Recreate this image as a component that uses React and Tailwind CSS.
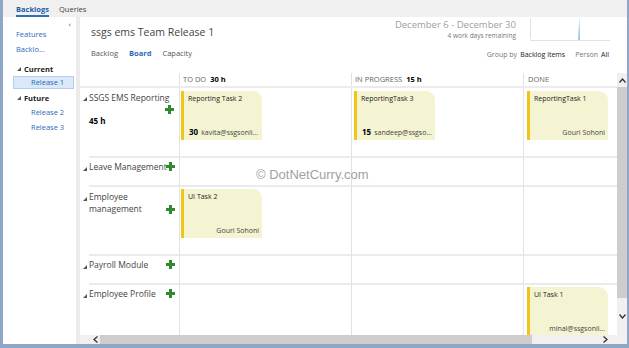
import React from "react";

const Plus = () => (
  <svg width="9" height="9" viewBox="0 0 9 9" className="shrink-0">
    <rect x="3" y="0" width="3" height="9" fill="#2f8a2f" />
    <rect x="0" y="3" width="9" height="3" fill="#2f8a2f" />
  </svg>
);

const Tri = () => (
  <svg width="4" height="4" viewBox="0 0 4 4" className="shrink-0">
    <polygon points="4,0 4,4 0,4" fill="#555" />
  </svg>
);

const Card = ({ title, hours, who, right }) => (
  <div className="w-[81px] h-[49px] bg-[#f5f4d2] border-l-[3px] border-[#f0c419] rounded-tr-[9px] flex flex-col justify-between pl-[4px] pr-[3px] pt-[3px] pb-[3px] text-[7px] leading-[9px] text-[#222]">
    <div>{title}</div>
    {right ? (
      <div className="text-right text-[#444]">{who}</div>
    ) : (
      <div className="flex items-baseline gap-[3px] pl-[1px]">
        <span className="font-bold text-[8px] text-black">{hours}</span>
        <span className="text-[#444] truncate">{who}</span>
      </div>
    )}
  </div>
);

const Empty = () => (
  <>
    <div className="w-[172px] shrink-0 border-l border-t-[2px] border-[#e2e2e2] border-t-[#ebebeb]" />
    <div className="w-[172px] shrink-0 border-l border-t-[2px] border-[#e2e2e2] border-t-[#ebebeb]" />
  </>
);

export default function App() {
  return (
    <div
      className="w-[629px] h-[348px] overflow-hidden bg-white flex flex-col border-l-[3px] border-r-[2px] border-b-[4px] border-[#8ea7c7] relative"
      style={{ fontFamily: '"Open Sans", "Noto Sans", sans-serif' }}
    >
      {/* top bar */}
      <div className="h-[17px] bg-[#f0f0f0] flex items-end pl-[13px] gap-[10px] text-[7.5px] shrink-0">
        <div className="font-bold text-[#1d5fa5] border-b-[2px] border-[#2b6fc0] pb-[1px] leading-[10px]">Backlogs</div>
        <div className="text-[#444] pb-[3px] leading-[10px]">Queries</div>
      </div>

      <div className="flex flex-1 min-h-0">
        {/* left panel */}
        <div className="w-[73px] relative text-[7.5px] leading-[10px] shrink-0">
          <div className="absolute right-[5px] top-[2px] text-[8px] text-[#555]">‹</div>
          <div className="pl-[13px] pt-[12px] text-[#2a6cb8]">Features</div>
          <div className="pl-[13px] pt-[5px] text-[#2a6cb8]">Backlo...</div>
          <div className="pl-[14px] pt-[10px] flex items-center gap-[3px] font-bold text-[#222]">
            <Tri />
            <span>Current</span>
          </div>
          <div className="ml-[10px] mr-[2px] mt-[2px] h-[13px] bg-[#dbe8f7] border border-[#b4cff0] pl-[17px] text-[#2a6cb8] leading-[11px]">Release 1</div>
          <div className="pl-[14px] pt-[4px] flex items-center gap-[3px] font-bold text-[#222]">
            <Tri />
            <span>Future</span>
          </div>
          <div className="pl-[28px] pt-[4px] text-[#2a6cb8]">Release 2</div>
          <div className="pl-[28px] pt-[5px] text-[#2a6cb8]">Release 3</div>
        </div>
        <div className="w-[4px] bg-[#ebebeb] shrink-0" />

        {/* main */}
        <div className="flex-1 flex flex-col min-w-0">
          {/* header */}
          <div className="h-[56px] flex shrink-0">
            <div className="pl-[11px] pt-[8px] flex-1">
              <div className="text-[10.5px] leading-[14px] text-[#444]">ssgs ems Team Release 1</div>
              <div className="flex gap-[11px] pt-[9px] text-[7.5px] leading-[10px]">
                <span className="text-[#555]">Backlog</span>
                <span className="font-bold text-[#2a6cb8]">Board</span>
                <span className="text-[#555]">Capacity</span>
              </div>
            </div>
            <div className="flex flex-col items-end pr-[17px]">
              <div className="flex">
                <div className="flex flex-col items-end pt-[2px]">
                  <div className="text-[9.5px] leading-[12px] text-[#a0a0a0]">December 6 - December 30</div>
                  <div className="text-[6.5px] leading-[9px] text-[#777]">4 work days remaining</div>
                </div>
                <svg width="80" height="24" viewBox="0 0 80 24" className="ml-[14px]">
                  <line x1="0.5" y1="1" x2="0.5" y2="22" stroke="#e2e2e2" />
                  <line x1="0" y1="23.5" x2="80" y2="23.5" stroke="#e2e2e2" />
                  <polygon points="48,23 49.5,0 50,23" fill="#9cc6e6" />
                </svg>
              </div>
              <div className="flex items-baseline gap-[3px] pt-[9px] text-[7px] leading-[10px] pr-[1px]">
                <span className="text-[#777]">Group by</span>
                <span className="text-[#222]">Backlog items</span>
                <span className="text-[#777] ml-[7px]">Person</span>
                <span className="text-[#222]">All</span>
              </div>
            </div>
          </div>

          {/* board */}
          <div className="flex-1 flex flex-col min-h-0">
            <div className="flex flex-1 min-h-0">
              <div className="flex-1 flex flex-col overflow-hidden text-[#444]">
                {/* header row */}
                <div className="flex h-[15px] border-b-[2px] border-[#ebebeb] shrink-0 text-[7.5px] leading-[13px]">
                  <div className="w-[99px] shrink-0" />
                  <div className="w-[172px] shrink-0 border-l border-[#e2e2e2] pl-[3px] flex gap-[4px]">
                    <span className="text-[#666]">TO DO</span>
                    <span className="font-bold text-black">30 h</span>
                  </div>
                  <div className="w-[172px] shrink-0 border-l border-[#e2e2e2] pl-[3px] flex gap-[4px]">
                    <span className="text-[#666]">IN PROGRESS</span>
                    <span className="font-bold text-black">15 h</span>
                  </div>
                  <div className="flex-1 border-l border-[#e2e2e2] pl-[4px]">
                    <span className="text-[#666]">DONE</span>
                  </div>
                </div>

                {/* row 1 */}
                <div className="flex h-[68px] shrink-0">
                  <div className="w-[99px] shrink-0 pl-[3px] pt-[4px] flex gap-[2px]">
                    <div className="pt-[5px]"><Tri /></div>
                    <div className="flex-1 pr-[5px]">
                      <div className="text-[8.5px] leading-[11px] whitespace-nowrap">SSGS EMS Reporting</div>
                      <div className="flex justify-end pt-[2px]"><Plus /></div>
                      <div className="font-bold text-[8px] text-black pt-[1px]">45 h</div>
                    </div>
                  </div>
                  <div className="w-[172px] shrink-0 border-l border-[#e2e2e2] pl-[1px] pt-[3px]">
                    <Card title="Reporting Task 2" hours="30" who="kavita@ssgsonli..." />
                  </div>
                  <div className="w-[172px] shrink-0 border-l border-[#e2e2e2] pl-[2px] pt-[3px]">
                    <Card title="ReportingTask 3" hours="15" who="sandeep@ssgso..." />
                  </div>
                  <div className="flex-1 border-l border-[#e2e2e2] pl-[3px] pt-[3px]">
                    <Card title="ReportingTask 1" who="Gouri Sohoni" right />
                  </div>
                </div>

                {/* row 2 */}
                <div className="flex h-[29px] shrink-0">
                  <div className="w-[99px] shrink-0 pl-[9px]">
                    <div className="border-t-[2px] border-[#ebebeb] h-full flex pt-[3px] relative">
                      <div className="absolute left-[-6px] top-[9px]"><Tri /></div>
                      <span className="text-[8.5px] leading-[11px] whitespace-nowrap w-[77px]">Leave Management</span>
                      <div className="pt-[1px]"><Plus /></div>
                    </div>
                  </div>
                  <Empty />
                  <div className="flex-1 border-l border-t-[2px] border-[#e2e2e2] border-t-[#ebebeb]" />
                </div>

                {/* row 3 */}
                <div className="flex h-[69px] shrink-0">
                  <div className="w-[99px] shrink-0 pl-[9px]">
                    <div className="border-t-[2px] border-[#ebebeb] h-full flex pt-[4px] relative">
                      <div className="absolute left-[-6px] top-[10px]"><Tri /></div>
                      <span className="text-[8.5px] leading-[12px] w-[77px]">Employee<br />management</span>
                      <div className="pt-[14px]"><Plus /></div>
                    </div>
                  </div>
                  <div className="w-[172px] shrink-0 border-l border-t-[2px] border-[#e2e2e2] border-t-[#ebebeb] pl-[1px] pt-[2px]">
                    <Card title="UI Task 2" who="Gouri Sohoni" right />
                  </div>
                  <div className="w-[172px] shrink-0 border-l border-t-[2px] border-[#e2e2e2] border-t-[#ebebeb]" />
                  <div className="flex-1 border-l border-t-[2px] border-[#e2e2e2] border-t-[#ebebeb]" />
                </div>

                {/* row 4 */}
                <div className="flex h-[29px] shrink-0">
                  <div className="w-[99px] shrink-0 pl-[9px]">
                    <div className="border-t-[2px] border-[#ebebeb] h-full flex pt-[3px] relative">
                      <div className="absolute left-[-6px] top-[9px]"><Tri /></div>
                      <span className="text-[8.5px] leading-[11px] whitespace-nowrap w-[77px]">Payroll Module</span>
                      <div className="pt-[1px]"><Plus /></div>
                    </div>
                  </div>
                  <Empty />
                  <div className="flex-1 border-l border-t-[2px] border-[#e2e2e2] border-t-[#ebebeb]" />
                </div>

                {/* row 5 */}
                <div className="flex h-[60px] shrink-0">
                  <div className="w-[99px] shrink-0 pl-[9px]">
                    <div className="border-t-[2px] border-[#ebebeb] h-full flex pt-[3px] relative">
                      <div className="absolute left-[-6px] top-[9px]"><Tri /></div>
                      <span className="text-[8.5px] leading-[11px] whitespace-nowrap w-[77px]">Employee Profile</span>
                      <div className="pt-[1px]"><Plus /></div>
                    </div>
                  </div>
                  <Empty />
                  <div className="flex-1 border-l border-t-[2px] border-[#e2e2e2] border-t-[#ebebeb] pl-[3px] pt-[2px]">
                    <Card title="UI Task 1" who="minal@ssgsonli..." right />
                  </div>
                </div>
              </div>

              {/* vertical scrollbar */}
              <div className="w-[10px] bg-[#f0f0f0] flex flex-col items-center shrink-0">
                <div className="h-[14px] flex items-center">
                  <svg width="7" height="5" viewBox="0 0 7 5"><polyline points="0.5,4.5 3.5,1 6.5,4.5" fill="none" stroke="#333" strokeWidth="1.3" /></svg>
                </div>
                <div className="w-[10px] h-[211px] bg-[#cdcdcd]" />
                <div className="flex-1 flex items-center">
                  <svg width="7" height="5" viewBox="0 0 7 5"><polyline points="0.5,0.5 3.5,4 6.5,0.5" fill="none" stroke="#333" strokeWidth="1.3" /></svg>
                </div>
              </div>
            </div>

            {/* horizontal scrollbar */}
            <div className="h-[9px] bg-[#f0f0f0] flex items-center shrink-0 pr-[10px]">
              <div className="w-[20px] flex justify-end pr-[2px]">
                <svg width="5" height="7" viewBox="0 0 5 7"><polyline points="4.5,0.5 1,3.5 4.5,6.5" fill="none" stroke="#333" strokeWidth="1.3" /></svg>
              </div>
              <div className="w-[432px] h-[9px] bg-[#cdcdcd]" />
              <div className="flex-1 flex justify-end pr-[9px]">
                <svg width="5" height="7" viewBox="0 0 5 7"><polyline points="0.5,0.5 4,3.5 0.5,6.5" fill="none" stroke="#333" strokeWidth="1.3" /></svg>
              </div>
            </div>
          </div>
        </div>
      </div>

      {/* watermark */}
      <div
        className="absolute left-[253px] top-[166px] text-[13px] leading-[17px] text-[#a0a0a0]"
        style={{ fontFamily: '"Liberation Sans", Arial, sans-serif' }}
      >
        © DotNetCurry.com
      </div>
    </div>
  );
}
